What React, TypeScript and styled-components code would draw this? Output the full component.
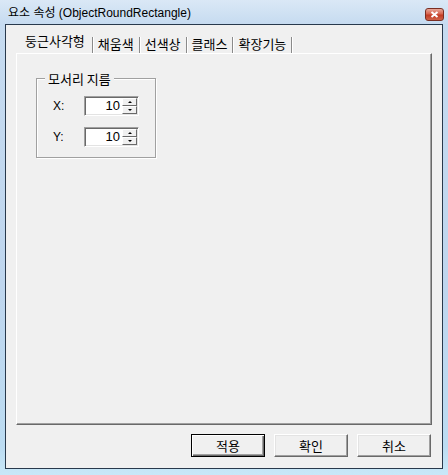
import React from "react";
import styled, { createGlobalStyle } from "styled-components";

const GlobalStyle = createGlobalStyle`
  html, body {
    margin: 0;
    padding: 0;
  }
  body {
    font-family: "Liberation Sans", "Noto Sans CJK KR", sans-serif;
    font-size: 12px;
    color: #000;
  }
`;

const Window = styled.div`
  width: 448px;
  height: 475px;
  box-sizing: border-box;
  display: flex;
  flex-direction: column;
  padding: 0 5px 6px 5px;
  background: linear-gradient(
    to bottom,
    #dae8f6 0px,
    #c6dbf0 24px,
    #bfd6ee 60%,
    #bcdcf2 94%,
    #c8e8f8 100%
  );
`;

const TitleBar = styled.div`
  height: 24px;
  display: flex;
  align-items: flex-start;
  justify-content: space-between;
`;

const Title = styled.div`
  padding: 6px 0 0 3px;
  line-height: 14px;
  font-size: 12px;
  white-space: nowrap;
`;

const CloseButton = styled.div`
  width: 19px;
  height: 13px;
  margin: 8px -1px 0 0;
  box-sizing: border-box;
  border: 1px solid #7a2e22;
  border-radius: 3px;
  background: linear-gradient(to bottom, #e8a89a 0%, #d6634d 45%, #c23b24 55%, #cf6248 100%);
  display: flex;
  align-items: center;
  justify-content: center;
`;

const Client = styled.div`
  flex: 1;
  display: flex;
  flex-direction: column;
  background: #f0f0f0;
  border: 1px solid #28394c;
  padding: 9px 10px 0 10px;
`;

const TabStrip = styled.div`
  height: 19px;
  display: flex;
  align-items: flex-end;
  padding-left: 3px;
`;

const Tab = styled.div<{ $active?: boolean }>`
  height: ${(p) => (p.$active ? 19 : 16)}px;
  box-sizing: border-box;
  padding: ${(p) => (p.$active ? "0 7px 0 6px" : "0 5px 0 4px")};
  line-height: 14px;
  font-family: "Noto Sans CJK KR", sans-serif;
  font-size: 13px;
  white-space: nowrap;
`;

const Sep = styled.span`
  width: 1px;
  height: 16px;
  background: #8a8a8a;
  box-shadow: 1px 0 0 #fff;
  margin-right: 1px;
`;

const Panel = styled.div`
  flex: 1;
  border: 1px solid;
  border-color: #fff #696969 #696969 #fff;
  box-shadow: inset -1px -1px 0 #a0a0a0;
  padding: 24px 0 0 19px;
`;

const GroupBox = styled.div`
  position: relative;
  width: 120px;
  height: 80px;
  box-sizing: border-box;
  border: 1px solid #a0a0a0;
  box-shadow: inset 1px 1px 0 #fff, 1px 1px 0 #fff;
  padding: 17px 0 0 16px;
  display: flex;
  flex-direction: column;
  gap: 11px;
`;

const Legend = styled.span`
  position: absolute;
  top: -8px;
  left: 8px;
  padding: 0 3px;
  background: #f0f0f0;
  line-height: 15px;
  font-family: "Noto Sans CJK KR", sans-serif;
  font-size: 13px;
`;

const Row = styled.div`
  display: flex;
  align-items: center;
  height: 20px;
`;

const Label = styled.span`
  width: 31px;
  line-height: 14px;
`;

const SpinEdit = styled.div`
  width: 55px;
  height: 20px;
  box-sizing: border-box;
  display: flex;
  background: #fff;
  border: 1px solid;
  border-color: #a0a0a0 #fff #fff #a0a0a0;
  box-shadow: inset 1px 1px 0 #696969, inset -1px -1px 0 #e3e3e3;
  padding: 1px;
`;

const Value = styled.span`
  flex: 1;
  text-align: right;
  padding-right: 2px;
  line-height: 16px;
  font-size: 13px;
`;

const SpinColumn = styled.div`
  width: 15px;
  display: flex;
  flex-direction: column;
`;

const SpinButton = styled.div`
  flex: 1;
  box-sizing: border-box;
  background: #f0f0f0;
  border: 1px solid;
  border-color: #fff #696969 #696969 #fff;
  display: flex;
  align-items: center;
  justify-content: center;
`;

const Arrow = styled.span<{ $down?: boolean }>`
  width: 0;
  height: 0;
  border-left: 2px solid transparent;
  border-right: 2px solid transparent;
  ${(p) => (p.$down ? "border-top: 2px solid #000;" : "border-bottom: 2px solid #000;")}
`;

const ButtonRow = styled.div`
  display: flex;
  justify-content: flex-end;
  gap: 9px;
  margin: 9px 0 11px;
  padding-right: 1px;
`;

const Button = styled.div<{ $default?: boolean }>`
  width: 74px;
  height: 23px;
  box-sizing: border-box;
  display: flex;
  align-items: center;
  justify-content: center;
  background: #f0f0f0;
  font-family: "Noto Sans CJK KR", sans-serif;
  font-size: 13px;
  border: 1px solid;
  border-color: ${(p) => (p.$default ? "#000" : "#fff #696969 #696969 #fff")};
  box-shadow: ${(p) =>
    p.$default
      ? "inset 1px 1px 0 #fff, inset -1px -1px 0 #696969, inset -2px -2px 0 #a0a0a0"
      : "inset -1px -1px 0 #a0a0a0, inset 1px 1px 0 #e3e3e3"};
`;

const tabs = ["둥근사각형", "채움색", "선색상", "클래스", "확장기능"];

function Spinner({ value }: { value: string }) {
  return (
    <SpinEdit>
      <Value>{value}</Value>
      <SpinColumn>
        <SpinButton>
          <Arrow />
        </SpinButton>
        <SpinButton>
          <Arrow $down />
        </SpinButton>
      </SpinColumn>
    </SpinEdit>
  );
}

export default function App() {
  return (
    <>
      <GlobalStyle />
      <Window>
        <TitleBar>
          <Title>요소 속성 (ObjectRoundRectangle)</Title>
          <CloseButton>
            <svg width="9" height="7" viewBox="0 0 9 7">
              <path d="M1.5 1 L7.5 6 M7.5 1 L1.5 6" stroke="#fff" strokeWidth="2" />
            </svg>
          </CloseButton>
        </TitleBar>
        <Client>
          <TabStrip>
            {tabs.map((t, i) => (
              <React.Fragment key={t}>
                <Tab $active={i === 0}>{t}</Tab>
                <Sep />
              </React.Fragment>
            ))}
          </TabStrip>
          <Panel>
            <GroupBox>
              <Legend>모서리 지름</Legend>
              <Row>
                <Label>X:</Label>
                <Spinner value="10" />
              </Row>
              <Row>
                <Label>Y:</Label>
                <Spinner value="10" />
              </Row>
            </GroupBox>
          </Panel>
          <ButtonRow>
            <Button $default>적용</Button>
            <Button>확인</Button>
            <Button>취소</Button>
          </ButtonRow>
        </Client>
      </Window>
    </>
  );
}
